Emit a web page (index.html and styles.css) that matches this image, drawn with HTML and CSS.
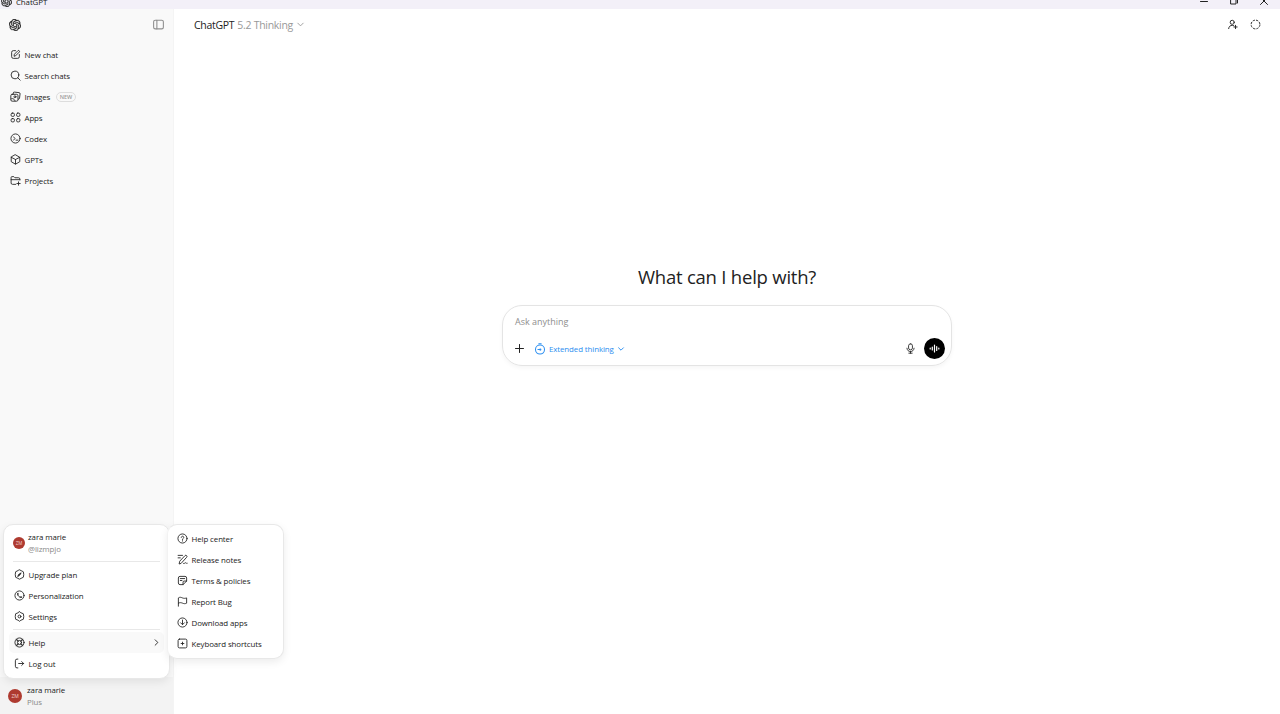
FILE: index.html
```html
<!DOCTYPE html>
<html lang="en">
<head>
<meta charset="UTF-8">
<title>ChatGPT</title>
<link rel="stylesheet" href="styles.css">
</head>
<body>
<svg class="defs">
	<symbol id="logo" viewBox="0 0 24 24"><path fill="currentColor" stroke-width="0.500" d="M22.2819 9.8211a5.9847 5.9847 0 0 0-.5157-4.9108 6.0462 6.0462 0 0 0-6.5098-2.9A6.0651 6.0651 0 0 0 4.9807 4.1818a5.9847 5.9847 0 0 0-3.9977 2.9 6.0462 6.0462 0 0 0 .7427 7.0966 5.98 5.98 0 0 0 .511 4.9107 6.051 6.051 0 0 0 6.5146 2.9001A5.9847 5.9847 0 0 0 13.2599 24a6.0557 6.0557 0 0 0 5.7718-4.2058 5.9894 5.9894 0 0 0 3.9977-2.9001 6.0557 6.0557 0 0 0-.7475-7.0729zm-9.022 12.6081a4.4755 4.4755 0 0 1-2.8764-1.0408l.1419-.0804 4.7783-2.7582a.7948.7948 0 0 0 .3927-.6813v-6.7369l2.02 1.1686a.071.071 0 0 1 .038.052v5.5826a4.504 4.504 0 0 1-4.4945 4.4944zm-9.6607-4.1254a4.4708 4.4708 0 0 1-.5346-3.0137l.142.0852 4.783 2.7582a.7712.7712 0 0 0 .7806 0l5.8428-3.3685v2.3324a.0804.0804 0 0 1-.0332.0615L9.74 19.9502a4.4992 4.4992 0 0 1-6.1408-1.6464zM2.3408 7.8956a4.485 4.485 0 0 1 2.3655-1.9728V11.6a.7664.7664 0 0 0 .3879.6765l5.8144 3.3543-2.0201 1.1685a.0757.0757 0 0 1-.071 0l-4.8303-2.7865A4.504 4.504 0 0 1 2.3408 7.872zm16.5963 3.8558L13.1038 8.364 15.1192 7.2a.0757.0757 0 0 1 .071 0l4.8303 2.7913a4.4944 4.4944 0 0 1-.6765 8.1042v-5.6772a.79.79 0 0 0-.407-.667zm2.0107-3.0231l-.142-.0852-4.7735-2.7818a.7759.7759 0 0 0-.7854 0L9.409 9.2297V6.8974a.0662.0662 0 0 1 .0284-.0615l4.8303-2.7866a4.4992 4.4992 0 0 1 6.6802 4.66zM8.3065 12.863l-2.02-1.1638a.0804.0804 0 0 1-.038-.0567V6.0742a4.4992 4.4992 0 0 1 7.3757-3.4537l-.142.0805L8.704 5.459a.7948.7948 0 0 0-.3927.6813zm1.0976-2.3654l2.602-1.4998 2.6069 1.4998v2.9994l-2.5974 1.4997-2.6067-1.4997Z"/></symbol>
	<symbol id="chevron" viewBox="0 0 10 10"><path d="M2 3.500 5 6.500 8 3.500"/></symbol>
</svg>

<header class="titlebar">
	<div class="app-name"><svg class="app-logo"><use href="#logo"/></svg><span>ChatGPT</span></div>
	<div class="window-buttons">
		<svg viewBox="0 0 10 10"><path d="M1.500 5.500h7"/></svg>
		<svg viewBox="0 0 10 10"><path d="M2 3h5v5H2zM3.500 1H8.500v6"/></svg>
		<svg viewBox="0 0 10 10"><path d="M1.500 1.500 8.500 8.500M8.500 1.500 1.500 8.500"/></svg>
	</div>
</header>

<div class="layout">
	<aside class="sidebar">
		<div class="sidebar-top">
			<svg class="logo"><use href="#logo"/></svg>
			<svg class="toggle" viewBox="0 0 12 12"><rect x="1.500" y="2" width="9" height="8" rx="1.500"/><path d="M4.500 2v8"/></svg>
		</div>
		<nav class="nav">
			<a class="row"><svg class="icon" viewBox="0 0 20 20"><path d="M10 3H6a3 3 0 0 0-3 3v8a3 3 0 0 0 3 3h8a3 3 0 0 0 3-3v-4M7.500 12.500l.5-3 6.500-6.500a1.800 1.800 0 0 1 2.500 2.500L10.500 12z"/></svg>New chat</a>
			<a class="row"><svg class="icon" viewBox="0 0 20 20"><circle cx="9" cy="9" r="7"/><path d="M14 14l4.500 4.500"/></svg>Search chats</a>
			<a class="row"><svg class="icon" viewBox="0 0 20 20"><path d="M6 5.500V4a2 2 0 0 1 2.300-2L16.500 3a2 2 0 0 1 1.800 2.300l-1 8A2 2 0 0 1 15 15"/><rect x="1.500" y="6" width="13" height="12.500" rx="2.500"/><circle cx="9" cy="10.500" r="1.800"/><path d="M2 14.500c3-2 6 0 7 3.500"/></svg>Images<span class="badge">NEW</span></a>
			<a class="row"><svg class="icon" viewBox="0 0 20 20"><rect x="2" y="2" width="6" height="6" rx="2.200"/><rect x="12" y="2" width="6" height="6" rx="2.200"/><rect x="2" y="12" width="6" height="6" rx="2.200"/><rect x="12" y="12" width="6" height="6" rx="2.200"/></svg>Apps</a>
			<a class="row"><svg class="icon" viewBox="0 0 20 20"><circle cx="10" cy="10" r="8.300"/><path d="M6.500 7l2.500 3-2.500 3M11 13h3.500"/></svg>Codex</a>
			<a class="row"><svg class="icon" viewBox="0 0 20 20"><path d="M10 1.500 17.800 6v8L10 18.500 2.200 14V6zM2.200 6 10 10l7.800-4M10 10v8"/></svg>GPTs</a>
			<a class="row"><svg class="icon" viewBox="0 0 20 20"><path d="M10.500 17H4.500A2.500 2.500 0 0 1 2 14.500V4.500A1.500 1.500 0 0 1 3.500 3H7l2 2h6.500A2.500 2.500 0 0 1 18 7.500V9M2 8.500h16M15.500 12.500v6M12.500 15.500h6"/></svg>Projects</a>
		</nav>
		<div class="account">
			<span class="avatar avatar-big">ZM</span>
			<div class="who"><div>zara marie</div><div class="muted">Plus</div></div>
		</div>
	</aside>

	<main class="main">
		<div class="main-top">
			<div class="model">ChatGPT <span>5.2 Thinking</span><svg><use href="#chevron"/></svg></div>
			<div class="actions">
				<svg viewBox="0 0 20 20"><circle cx="9.500" cy="6" r="3.700"/><path d="M3 17.500c.5-4 3-6 6.500-6 1 0 2 .2 2.800.6M15.500 11.500v6M12.500 14.500h6"/></svg>
				<svg class="temp" viewBox="0 0 20 20"><circle cx="10" cy="10" r="8" stroke-dasharray="4.200 2.083"/></svg>
			</div>
		</div>
		<div class="center">
			<h1>What can I help with?</h1>
			<div class="composer">
				<div class="placeholder">Ask anything</div>
				<div class="tools">
					<svg class="plus" viewBox="0 0 9 9"><path d="M4.500 .500v8M.500 4.500h8"/></svg>
					<svg class="timer" viewBox="0 0 20 20"><circle cx="10" cy="11" r="7.500"/><path d="M8 1.300h4M6.500 11h3"/><circle cx="10.500" cy="11" r="1"/></svg>
					<span class="thinking">Extended thinking</span>
					<svg class="down"><use href="#chevron"/></svg>
					<svg class="mic" viewBox="0 0 20 20"><rect x="6.500" y="1.500" width="7" height="11" rx="3.500"/><path d="M3.500 9.500c.5 4 3 6 6.500 6s6-2 6.500-6M10 15.500v3M7 18.500h6"/></svg>
					<span class="voice"><svg viewBox="0 0 11 11"><path d="M1.200 5v1M3.300 4v3M5.500 2v7M7.700 3.500v4M9.800 5v1"/></svg></span>
				</div>
			</div>
		</div>
	</main>
</div>

<div class="menu user-menu">
	<div class="user">
		<span class="avatar">ZM</span>
		<div class="who"><div>zara marie</div><div class="muted">@lizmpjo</div></div>
	</div>
	<hr>
	<a class="row"><svg class="icon" viewBox="0 0 20 20"><path d="M10 1.500 13 3 17 5l.7 5-.7 5-4 2-3 1.500L7 17l-4-2-.7-5L3 5l4-2z"/><path d="M7 13l1.500-3L13 7l-2.500 4z" fill="currentColor"/></svg>Upgrade plan</a>
	<a class="row"><svg class="icon" viewBox="0 0 20 20"><circle cx="10" cy="10" r="8.300"/><path d="M7 6c-1 4 2 8 7 7M7 6v3M14 13h-3"/></svg>Personalization</a>
	<a class="row"><svg class="icon" viewBox="0 0 20 20"><path d="M10 1.200 12.500 3.200 17 5l.7 5-.7 5-4.500 1.800L10 18.800l-2.500-2L3 15l-.7-5L3 5l4.500-1.800z"/><circle cx="10" cy="10" r="2.600"/></svg>Settings</a>
	<hr>
	<a class="row active"><svg class="icon" viewBox="0 0 20 20"><circle cx="10" cy="10" r="8.300"/><circle cx="10" cy="10" r="3.700"/><path d="M4 5l3.300 2.500M5 4l2.500 3.300M16 5l-3.300 2.500M15 4l-2.500 3.300M4 15l3.300-2.500M5 16l2.500-3.300M16 15l-3.300-2.500M15 16l-2.500-3.300"/></svg>Help<svg class="next"><use href="#chevron"/></svg></a>
	<a class="row"><svg class="icon" viewBox="0 0 20 20"><path d="M7 2H5.500a3 3 0 0 0-3 3v10a3 3 0 0 0 3 3H7M8.500 10h9M14 6.500 17.500 10 14 13.500"/></svg>Log out</a>
</div>

<div class="menu help-menu">
	<a class="row"><svg class="icon" viewBox="0 0 20 20"><circle cx="10" cy="10" r="8.300"/><path d="M7.700 8a2.300 2.300 0 1 1 3.500 2c-.8.500-1.200.9-1.200 1.800M10 14v.700"/></svg>Help center</a>
	<a class="row"><svg class="icon" viewBox="0 0 20 20"><path d="M4 17.500l1-4.500L14.500 3a2 2 0 0 1 3 3L8 16.500zM2 2.500h8M2 7h4M12 17.500c2 1 2-2.500 4-1.500s1 1.500 2.500 1"/></svg>Release notes</a>
	<a class="row"><svg class="icon" viewBox="0 0 20 20"><path d="M11 17.500H5.500a3 3 0 0 1-3-3v-9a3 3 0 0 1 3-3h9a3 3 0 0 1 3 3V11L11 17.500V13a2 2 0 0 1 2-2h4.500M6 6.500h8M6 10h3"/></svg>Terms &amp; policies</a>
	<a class="row"><svg class="icon" viewBox="0 0 20 20"><path d="M2.500 18.500V3.500c3-2 5-1 7.500 0s4.500 1 7.500 0v9.500c-3 1.500-5 1-7.500 0s-4.500-1.500-7.500 0"/></svg>Report Bug</a>
	<a class="row"><svg class="icon" viewBox="0 0 20 20"><circle cx="10" cy="10" r="8.300"/><path d="M10 5.500v8M6.500 10.500l3.500 3.500 3.500-3.500"/></svg>Download apps</a>
	<a class="row"><svg class="icon" viewBox="0 0 20 20"><rect x="2" y="2" width="16" height="16" rx="2.500"/><path d="M10 7.500v5M7.500 10h5"/></svg>Keyboard shortcuts</a>
</div>
</body>
</html>
```
FILE: styles.css
```css
* {
	box-sizing: border-box;
}
body {
	margin: 0;
	height: 714px;
	overflow: hidden;
	display: flex;
	flex-direction: column;
	background: #fff;
	color: #222;
	font-family: "Open Sans", "Noto Sans", sans-serif;
	font-size: 7.9px;
	letter-spacing: -0.1px;
}
svg {
	display: block;
	flex: none;
	fill: none;
	stroke: currentColor;
	stroke-linecap: round;
	stroke-linejoin: round;
}
.defs {
	position: absolute;
	width: 0;
	height: 0;
}

/* window title bar */
.titlebar {
	height: 9px;
	flex: none;
	display: flex;
	justify-content: space-between;
	overflow: hidden;
	background: #f3f0f8;
}
.app-name {
	display: flex;
	gap: 4px;
	margin-top: -4px;
	padding-left: 1px;
	line-height: 12px;
}
.app-logo {
	width: 11px;
	height: 11px;
}
.window-buttons {
	display: flex;
	gap: 20px;
	margin-top: -4px;
	padding-right: 11px;
}
.window-buttons svg {
	width: 10px;
	height: 10px;
}

.layout {
	flex: 1;
	display: flex;
	min-height: 0;
}

/* sidebar */
.sidebar {
	width: 174px;
	flex: none;
	display: flex;
	flex-direction: column;
	background: #f9f9f9;
	border-right: 1px solid #f4f4f4;
}
.sidebar-top {
	display: flex;
	justify-content: space-between;
	align-items: center;
	height: 31px;
	padding: 0 8px 0 9px;
}
.logo {
	width: 12px;
	height: 12px;
}
.toggle {
	width: 13px;
	height: 13px;
	color: #8f8f8f;
}
.nav {
	padding: 4px 10px;
}
.row {
	display: flex;
	align-items: center;
	height: 21px;
	gap: 3.5px;
	white-space: nowrap;
}
.icon {
	width: 11px;
	height: 11px;
	stroke-width: 1.6;
}
.badge {
	margin-left: 2px;
	padding: 0 3px;
	border: 1px solid #ddd;
	border-radius: 5px;
	color: #999;
	font-size: 5.5px;
	font-weight: 600;
	line-height: 8px;
}
.account {
	margin-top: auto;
	height: 37px;
	display: flex;
	align-items: center;
	gap: 5px;
	padding: 0 8px;
	background: #f3f3f3;
}
.avatar {
	width: 12px;
	height: 12px;
	flex: none;
	border-radius: 50%;
	background: #ae3a30;
	color: #f1d0cc;
	font-size: 4.5px;
	line-height: 12px;
	text-align: center;
}
.avatar-big {
	width: 14px;
	height: 14px;
	line-height: 14px;
	font-size: 5px;
}
.who {
	line-height: 12px;
}
.muted {
	color: #8a8a8a;
}

/* main area */
.main {
	flex: 1;
	display: flex;
	flex-direction: column;
}
.main-top {
	display: flex;
	justify-content: space-between;
	align-items: center;
	height: 31px;
	padding: 0 19px 0 20px;
}
.model {
	display: flex;
	align-items: center;
	gap: 3px;
	font-size: 10.5px;
	letter-spacing: -0.29px;
}
.model span,
.model svg {
	color: #999;
}
.model svg {
	width: 9px;
	height: 9px;
}
.actions {
	display: flex;
	gap: 12px;
}
.actions svg {
	width: 11px;
	height: 11px;
	stroke-width: 1.7;
}
.actions .temp {
	stroke-linecap: butt;
}
.center {
	display: flex;
	flex-direction: column;
	align-items: center;
	padding-top: 223px;
}
h1 {
	margin: 0 0 15px;
	font-size: 18.5px;
	font-weight: 400;
	line-height: 27px;
	letter-spacing: -0.22px;
}
.composer {
	width: 450px;
	height: 61px;
	padding: 10px 6px 0 12px;
	border: 1px solid #e4e4e4;
	border-radius: 20px;
	box-shadow: 0 2px 4px rgba(0, 0, 0, 0.04);
}
.placeholder {
	color: #8e8e8e;
	font-size: 9px;
	line-height: 12px;
	letter-spacing: 0;
}
.tools {
	display: flex;
	align-items: center;
	height: 21px;
	margin-top: 10px;
}
.plus {
	width: 9px;
	height: 9px;
}
.timer {
	width: 12px;
	height: 12px;
	margin: 0 3px 0 10px;
	color: #2b8ef0;
	stroke-width: 1.7;
}
.thinking {
	color: #2b8ef0;
}
.down {
	width: 8px;
	height: 8px;
	margin-left: 3px;
	color: #2b8ef0;
	stroke-width: 1.2;
}
.mic {
	width: 11px;
	height: 11px;
	margin-left: auto;
	stroke-width: 1.6;
}
.voice {
	display: flex;
	align-items: center;
	justify-content: center;
	width: 21px;
	height: 21px;
	margin-left: 8px;
	border-radius: 50%;
	background: #000;
	color: #fff;
}
.voice svg {
	width: 11px;
	height: 11px;
	stroke-width: 1.2;
}

/* popup menus */
.menu {
	position: absolute;
	background: #fff;
	border: 1px solid #e8e8e8;
	border-radius: 10px;
	box-shadow: 0 3px 8px rgba(0, 0, 0, 0.08);
}
.user-menu {
	left: 3px;
	top: 524px;
	width: 167px;
	height: 155px;
	padding: 5px;
}
.help-menu {
	left: 167px;
	top: 524px;
	width: 117px;
	height: 135px;
	padding: 3px 9px;
	border-left-color: #f2f2f2;
}
.user {
	display: flex;
	align-items: center;
	gap: 3px;
	height: 26px;
	padding-left: 4px;
}
.menu hr {
	height: 1px;
	margin: 5px 4px 2px;
	border: 0;
	background: #e8e8e8;
}
.menu .row + hr {
	margin: 2px 4px;
}
.user-menu .row {
	padding-left: 5px;
}
.active {
	border-radius: 5px;
	background: #f9f9f9;
}
.next {
	width: 9px;
	height: 9px;
	margin: 0 3px 0 auto;
	transform: rotate(-90deg);
}
```
